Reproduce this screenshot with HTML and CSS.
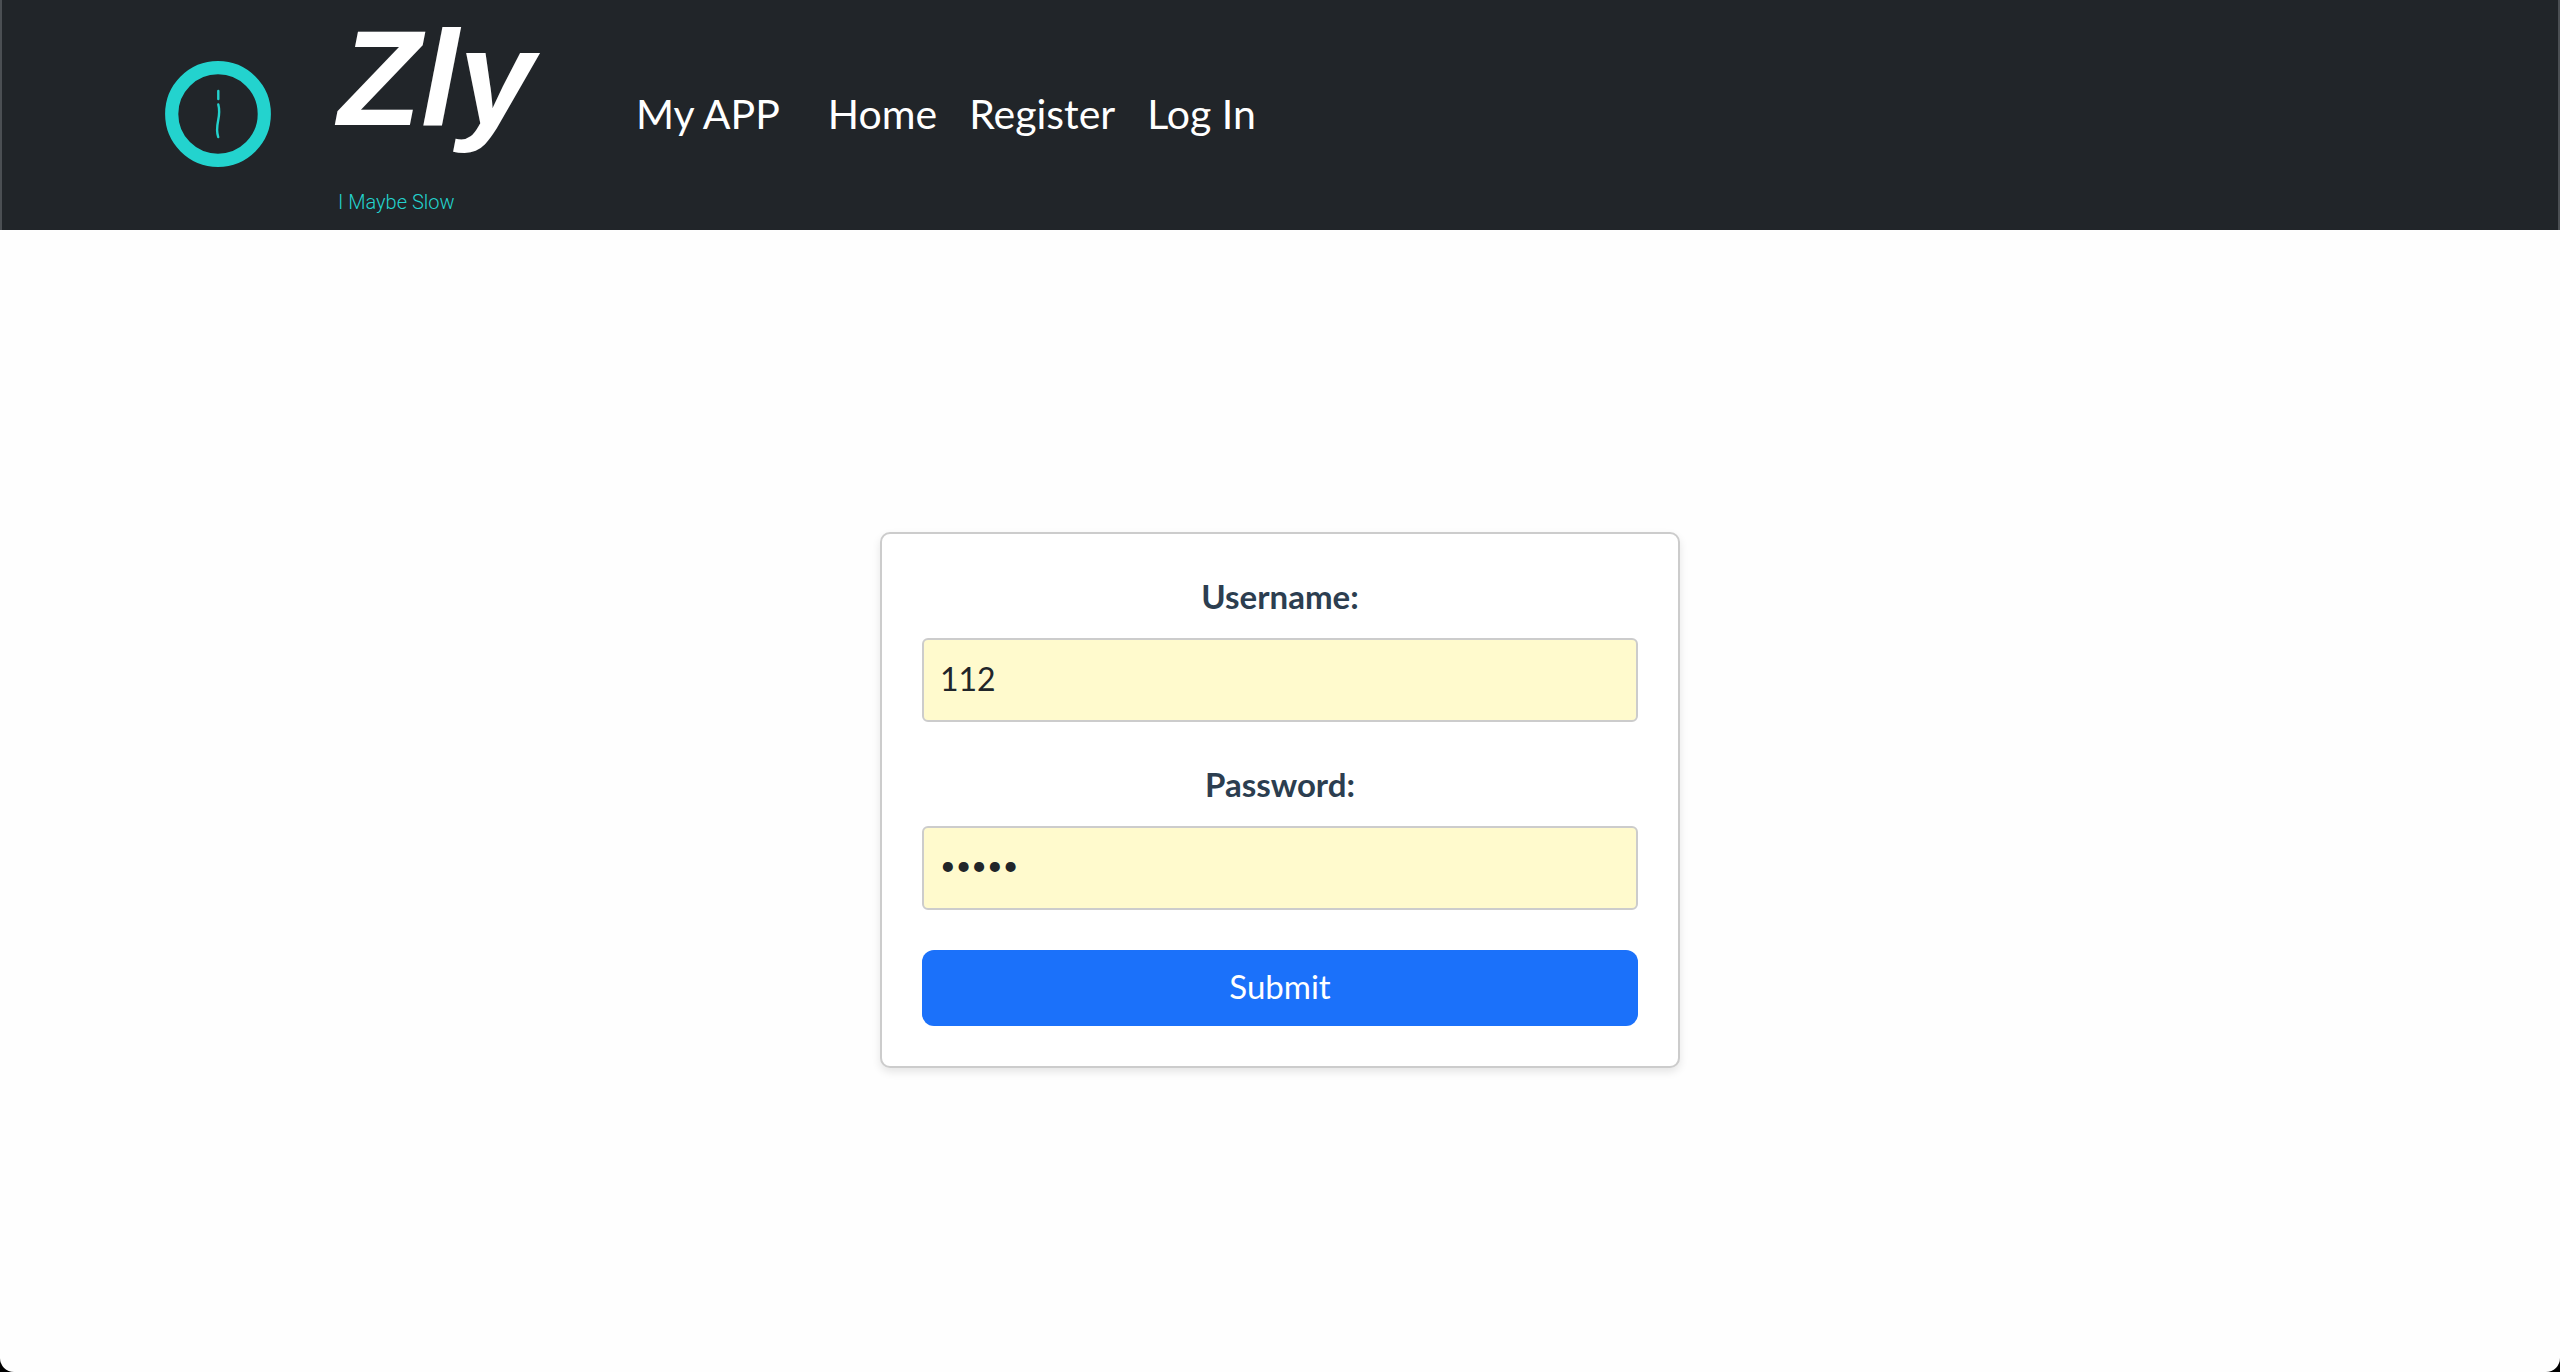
FILE: index.html
```html
<!DOCTYPE html>
<html lang="en">
<head>
  <meta charset="utf-8">
  <meta name="viewport" content="width=device-width, initial-scale=1">
  <title>Zly</title>
  <link rel="stylesheet" href="styles.css">
</head>
<body>
  <header class="navbar">
    <div class="logo">
      <svg class="logo-mark" viewBox="0 0 106 106" aria-hidden="true">
        <circle cx="53" cy="53" r="46.3" fill="none" stroke="#23d3ce" stroke-width="13.2"/>
        <path d="M53.300 30v8M53.300 43.500C57 57 49 63 53.200 76" fill="none" stroke="#23d3ce" stroke-width="2.400" stroke-linecap="round"/>
      </svg>
      <div class="logo-words">
        <span class="logo-name">Zly</span>
        <span class="logo-tagline">I Maybe Slow</span>
      </div>
    </div>
    <a class="brand" href="#">My APP</a>
    <nav class="links">
      <a class="link" href="#">Home</a>
      <a class="link" href="#">Register</a>
      <a class="link" href="#">Log In</a>
    </nav>
  </header>
  <main class="content">
    <form class="card">
      <div class="field">
        <label class="label" for="username">Username:</label>
        <input class="input" id="username" type="text" value="112">
      </div>
      <div class="field">
        <label class="label" for="password">Password:</label>
        <input class="input input-password" id="password" type="password" value="11234">
      </div>
      <button class="submit" type="button">Submit</button>
    </form>
  </main>
</body>
</html>
```

FILE: styles.css
```css
*, *::before, *::after {
  box-sizing: border-box;
}

html {
  background: #000;
}

body {
  margin: 0;
  min-height: 100vh;
  display: flex;
  flex-direction: column;
  background: #fefefe;
  border-radius: 0 0 14px 14px;
  font-family: Lato, "Liberation Sans", sans-serif;
  font-size: 32px;
  line-height: 48px;
  color: #212529;
}

.navbar {
  display: flex;
  align-items: center;
  padding: 0 163px 3px;
  background: #212529;
  border: solid #4b4f53;
  border-width: 0 2px;
}

.logo {
  display: flex;
  align-items: center;
  gap: 67px;
  width: 471px;
}

.logo-mark {
  width: 106px;
  height: 106px;
}

.logo-words {
  display: flex;
  flex-direction: column;
}

.logo-name {
  font-family: "Liberation Sans", Arial, sans-serif;
  font-size: 136px;
  font-weight: 700;
  font-style: italic;
  line-height: 156px;
  color: #fff;
}

.logo-tagline {
  padding: 28px 0 7px;
  font-family: Roboto, sans-serif;
  font-size: 20px;
  font-weight: 300;
  line-height: 36px;
  color: #23d3ce;
}

.brand,
.link {
  font-size: 41px;
  line-height: 60px;
  color: #fff;
  text-decoration: none;
}

.brand {
  margin-right: 32px;
}

.links {
  display: flex;
}

.link {
  padding: 0 16px;
}

.content {
  flex: 1;
  display: flex;
  align-items: center;
  justify-content: center;
  padding-bottom: 2px;
}

.card {
  width: 100%;
  max-width: 800px;
  display: flex;
  flex-direction: column;
  gap: 40px;
  padding: 40px;
  background: #fff;
  border: 2px solid #ccc;
  border-radius: 10px;
  box-shadow: 0 4px 8px rgba(0, 0, 0, 0.1);
}

.field {
  display: flex;
  flex-direction: column;
  gap: 20px;
}

.label {
  font-size: 33px;
  font-weight: 700;
  line-height: 44px;
  color: #2c3e50;
  text-align: center;
}

.input {
  width: 100%;
  height: 84px;
  padding: 14px 16px 18px;
  font: inherit;
  color: #212529;
  background: #fffacd;
  border: 2px solid #ccc;
  border-radius: 6px;
}

.input-password {
  padding: 12px 16px 20px;
  font-size: 27px;
}

.submit {
  padding: 12px 24px 16px;
  font: inherit;
  font-size: 33px;
  color: #fff;
  background: #1b71fa;
  border: 0;
  border-radius: 12px;
}
```
